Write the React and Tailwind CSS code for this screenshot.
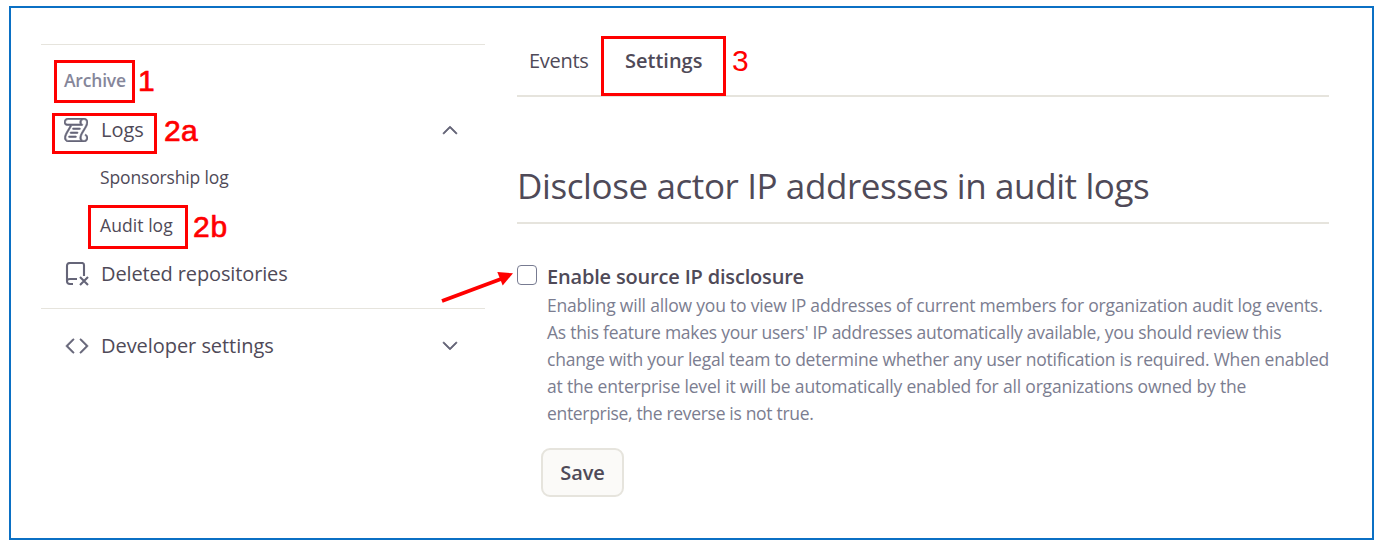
import React from "react";
import { GoLog, GoCode, GoChevronUp, GoChevronDown } from "react-icons/go";

const LINES = [
  ["Enabling will allow you to view IP addresses of current members for organization audit log events.", "tracking-[-0.19px]"],
  ["As this feature makes your users' IP addresses automatically available, you should review this", "tracking-[-0.265px]"],
  ["change with your legal team to determine whether any user notification is required. When enabled", "tracking-[-0.22px]"],
  ["at the enterprise level it will be automatically enabled for all organizations owned by the", "tracking-[-0.177px]"],
  ["enterprise, the reverse is not true.", "tracking-[-0.32px]"],
];

function RepoDeleted({ className }) {
  return (
    <svg className={className} viewBox="0 0 24 24" fill="none" stroke="currentColor" strokeWidth="2.1">
      <path d="M8 22H5Q2 22 2 19V4Q2 1 5 1H17Q19 1 19 3V14M2 19Q2 17 5 17H12" />
      <path d="M15 15L23 23M23 15L15 23" />
    </svg>
  );
}

function Callout({ className, children }) {
  return (
    <span className={"font-['Liberation_Sans',Arial,sans-serif] text-[30px] leading-none text-[#ff0000] " + className}>
      {children}
    </span>
  );
}

function Arrow() {
  return (
    <svg className="absolute left-[-77px] top-[-5px]" width="76" height="44">
      <path d="M1 40L60 18" stroke="#ff0000" strokeWidth="4" />
      <path d="M56.3 11L72 12.3L61.7 24.5Z" fill="#ff0000" />
    </svg>
  );
}

export default function App() {
  return (
    <div className="h-[549px] w-[1380px] bg-white pl-[9px] pt-[6px] font-['Open_Sans','Noto_Sans',sans-serif] text-[#4f4a58]">
      <div className="flex h-[534px] w-[1365px] border-2 border-[#0b70c4] pl-[30px]">
        <aside className="w-[444px] pt-[36px]">
          <div className="border-t border-[#e6e4dd] pt-[15px]">
            <div className="flex h-[43px] items-center pl-[13px]">
              <div className="flex h-[43px] w-[81px] items-center border-[3px] border-[#ff0000] pb-[2px] pl-[7px] text-[17.5px] font-semibold tracking-[-0.2px] text-[#85869a]">
                Archive
              </div>
              <Callout className="pb-px pl-[3px] [-webkit-text-stroke:0.7px_#ff0000]">1</Callout>
            </div>
            <div className="mt-[10px] flex h-[41px] items-center pl-[11px]">
              <div className="flex h-[41px] w-[105px] items-center border-[3px] border-[#ff0000] pb-[7px] pl-[9px] text-[20px]">
                <GoLog className="mr-[13px] size-6 stroke-[0.6] text-[#656578]" />
                Logs
              </div>
              <Callout className="pb-[5px] pl-[7px] tracking-[0.4px] [-webkit-text-stroke:0.7px_#ff0000]">2a</Callout>
              <GoChevronUp className="mb-[7px] ml-auto mr-[23px] size-6 stroke-[0.7] text-[#656578]" />
            </div>
            <div className="mt-[10px] flex h-[27px] items-center pl-[59px] text-[17.5px] tracking-[-0.15px]">Sponsorship log</div>
            <div className="mt-[14px] flex h-[44px] items-center pl-[47px]">
              <div className="flex h-[44px] w-[100px] items-center border-[3px] border-[#ff0000] pb-[3px] pl-[9px] text-[17.5px] tracking-[0.07px]">
                Audit log
              </div>
              <Callout className="pl-[5px] tracking-[0.9px] [-webkit-text-stroke:0.7px_#ff0000]">2b</Callout>
            </div>
            <div className="mt-[9px] flex h-[32px] items-center pl-[24px] text-[20px] tracking-[-0.13px]">
              <RepoDeleted className="mr-3 size-6 text-[#656578]" />
              Deleted repositories
            </div>
            <div className="mt-[18px] flex h-[74px] items-center border-t border-[#e6e4dd] pl-[24px] text-[20px] tracking-[-0.05px]">
              <GoCode className="mr-3 size-6 stroke-[0.7] text-[#656578]" />
              Developer settings
              <GoChevronDown className="ml-auto mr-[23px] size-6 stroke-[0.7] text-[#656578]" />
            </div>
          </div>
        </aside>
        <main className="ml-[32px] w-[812px] pt-[28px]">
          <div className="flex h-[61px] border-b-2 border-[#e6e4dd]">
            <div className="flex w-[84px] items-center pb-[9px] pl-[12px] text-[20px] tracking-[-0.3px]">Events</div>
            <div className="flex h-[60px] w-[125px] items-center border-[3px] border-[#ff0000] pb-[10px] pl-[21px] text-[20px] font-semibold">
              Settings
            </div>
            <Callout className="pl-[6px] pt-[10px]">3</Callout>
          </div>
          <h1 className="mt-[65px] h-[62px] border-b-2 border-[#e6e4dd] text-[35px] leading-[48px] tracking-[-0.4px]">
            Disclose actor IP addresses in audit logs
          </h1>
          <div className="mt-[38px] flex">
            <div className="relative mt-[3px] size-5 rounded-[4px] border-[1.5px] border-[#777b91]">
              <Arrow />
            </div>
            <div className="ml-[10px]">
              <h2 className="h-[30px] whitespace-nowrap text-[20px] font-semibold leading-[30px] tracking-[-0.18px]">
                Enable source IP disclosure
              </h2>
              {LINES.map(([text, tracking]) => (
                <p key={text} className={"h-[27px] whitespace-nowrap text-[17.5px] leading-[27px] text-[#7b7d90] " + tracking}>
                  {text}
                </p>
              ))}
            </div>
          </div>
          <button className="ml-[24px] mt-[21px] h-[49px] w-[83px] rounded-[9px] border-2 border-[#e6e4dd] bg-[#fbfaf8] text-[20px] font-semibold tracking-[-0.1px]">
            Save
          </button>
        </main>
      </div>
    </div>
  );
}
